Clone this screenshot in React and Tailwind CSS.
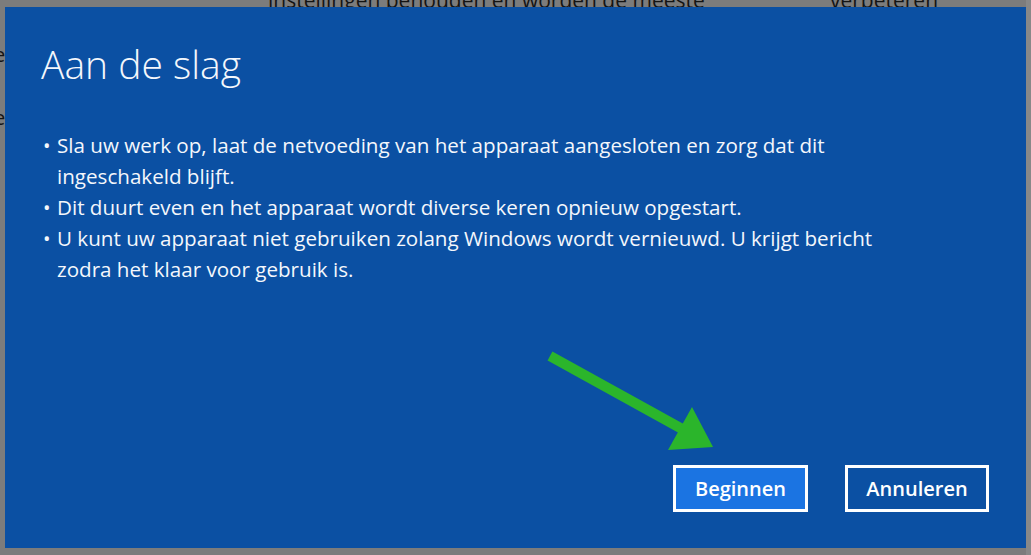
export default function App() {
  const font = { fontFamily: '"Open Sans", "Noto Sans", sans-serif' };
  return (
    <div
      className="relative h-[555px] w-[1031px] overflow-hidden bg-[#7c7c7c] text-[#141414]"
      style={font}
    >
      {/* page behind the dimmed overlay */}
      <div className="absolute left-[268px] top-[-15px] whitespace-nowrap text-[21px]">
        instellingen behouden en worden de meeste
      </div>
      <div className="absolute left-[830px] top-[-15px] whitespace-nowrap text-[21px]">
        verbeteren
      </div>
      <div className="absolute left-[-6px] top-[40px] text-[20px]">e</div>
      <div className="absolute left-[-6px] top-[103px] text-[20px]">e</div>
      <div className="absolute left-[1026px] top-[133px] text-[20px]">g</div>
      <div className="absolute left-[1024px] top-[172px] text-[20px]">o</div>
      <div className="absolute left-[1025px] top-[205px] text-[20px]">/</div>
      <div className="absolute right-0 top-0 h-full w-[5px] bg-[#888888]" />

      {/* dialog */}
      <div className="absolute left-[5px] top-[7px] flex h-[541px] w-[1021px] flex-col bg-[#0b50a3] text-[#f4f7fc]">
        <h1 className="pl-[36px] pt-[32px] text-[39px] font-light leading-[50px]">
          Aan de slag
        </h1>

        <ul className="mt-[41px] flex flex-col pl-[38px] text-[20.6px] leading-[31px]">
          <li className="flex">
            <span className="w-[14px] shrink-0 text-[20px]">•</span>
            <span className="whitespace-nowrap">
              Sla uw werk op, laat de netvoeding van het apparaat aangesloten en zorg dat dit
              <br />
              ingeschakeld blijft.
            </span>
          </li>
          <li className="flex">
            <span className="w-[14px] shrink-0 text-[20px]">•</span>
            <span className="whitespace-nowrap">
              Dit duurt even en het apparaat wordt diverse keren opnieuw opgestart.
            </span>
          </li>
          <li className="flex">
            <span className="w-[14px] shrink-0 text-[20px]">•</span>
            <span className="whitespace-nowrap">
              U kunt uw apparaat niet gebruiken zolang Windows wordt vernieuwd. U krijgt bericht
              <br />
              zodra het klaar voor gebruik is.
            </span>
          </li>
        </ul>

        <div className="mt-auto flex justify-end gap-[37px] pb-[36px] pr-[37px]">
          <button className="h-[47px] w-[135px] border-[3px] border-white bg-[#1b74e2] text-[20px] font-semibold text-white">
            Beginnen
          </button>
          <button className="h-[47px] w-[144px] border-[3px] border-white bg-transparent text-[20px] font-semibold text-white">
            Annuleren
          </button>
        </div>
      </div>

      {/* green annotation arrow */}
      <svg
        className="absolute left-0 top-0"
        width="1031"
        height="555"
        viewBox="0 0 1031 555"
      >
        <line x1="550" y1="356" x2="684" y2="430" stroke="#2bb52b" strokeWidth="10" />
        <polygon points="692,407 668,450 713,447" fill="#2bb52b" />
      </svg>
    </div>
  );
}
